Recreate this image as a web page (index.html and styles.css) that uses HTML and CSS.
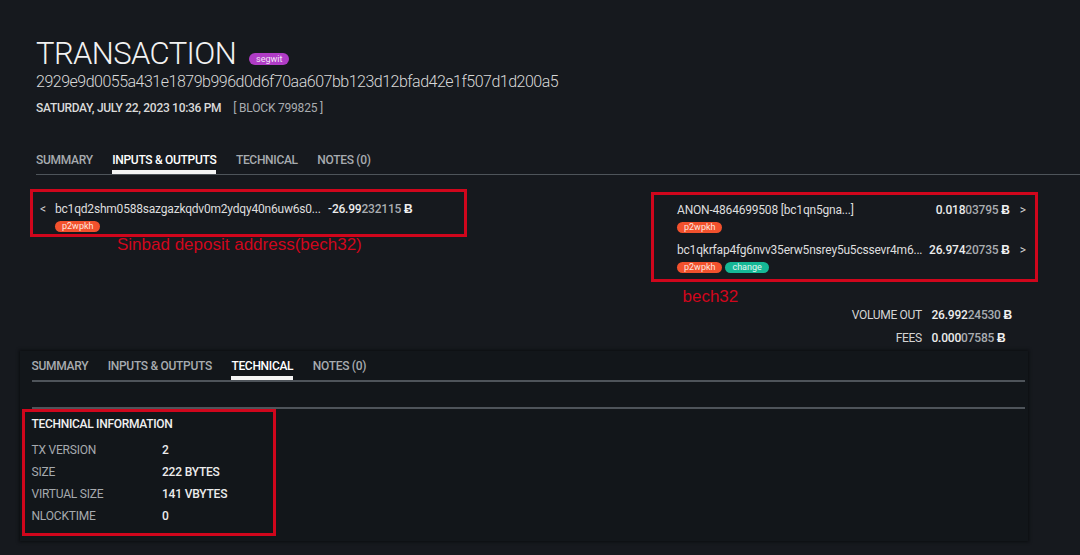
FILE: index.html
```html
<!DOCTYPE html>
<html lang="en">
<head>
<meta charset="utf-8">
<title>Transaction 2929e9d0…200a5</title>
<link rel="stylesheet" href="styles.css">
</head>
<body>
<main class="page">
  <header class="tx-head">
    <h1 class="tx-title"><span>TRANSACTION</span><span class="badge badge-segwit">segwit</span></h1>
    <div class="tx-hash">2929e9d0055a431e1879b996d0d6f70aa607bb123d12bfad42e1f507d1d200a5</div>
    <div class="tx-meta"><span class="tx-date">SATURDAY, JULY 22, 2023 10:36 PM</span><span class="tx-block">[ BLOCK 799825 ]</span></div>
  </header>

  <nav class="tabs tabs-main">
    <a class="tab">SUMMARY</a>
    <a class="tab active">INPUTS &amp; OUTPUTS</a>
    <a class="tab">TECHNICAL</a>
    <a class="tab">NOTES (0)</a>
  </nav>

  <section class="io">
    <div class="io-col io-in">
      <div class="mark mark-in">
        <div class="io-row">
          <span class="io-arrow">&lt;</span>
          <span class="io-addr">bc1qd2shm0588sazgazkqdv0m2ydqy40n6uw6s0...</span>
          <span class="amt"><b>-26.99</b>232115 <i class="btc">Ƀ</i></span>
        </div>
        <div class="tags tags-in"><span class="tag tag-type">p2wpkh</span></div>
        <p class="note note-in">Sinbad deposit address(bech32)</p>
      </div>
    </div>

    <div class="io-col io-out">
      <div class="mark mark-out">
        <div class="out-item">
          <div class="io-row">
            <span class="io-addr">ANON-4864699508 [bc1qn5gna...]</span>
            <span class="amt"><b>0.018</b>03795 <i class="btc">Ƀ</i></span>
            <span class="io-arrow">&gt;</span>
          </div>
          <div class="tags"><span class="tag tag-type">p2wpkh</span></div>
        </div>
        <div class="out-item">
          <div class="io-row">
            <span class="io-addr">bc1qkrfap4fg6nvv35erw5nsrey5u5cssevr4m6...</span>
            <span class="amt"><b>26.974</b>20735 <i class="btc">Ƀ</i></span>
            <span class="io-arrow">&gt;</span>
          </div>
          <div class="tags"><span class="tag tag-type">p2wpkh</span><span class="tag tag-change">change</span></div>
        </div>
        <p class="note note-out">bech32</p>
      </div>

      <dl class="totals">
        <dt>VOLUME OUT</dt>
        <dd class="amt"><b>26.992</b>24530 <i class="btc">Ƀ</i></dd>
        <dt>FEES</dt>
        <dd class="amt"><b>0.000</b>07585 <i class="btc">Ƀ</i></dd>
      </dl>
    </div>
  </section>

  <section class="panel">
    <nav class="tabs tabs-tech">
      <a class="tab">SUMMARY</a>
      <a class="tab">INPUTS &amp; OUTPUTS</a>
      <a class="tab active">TECHNICAL</a>
      <a class="tab">NOTES (0)</a>
    </nav>
    <div class="panel-rule"></div>
    <div class="mark mark-tech">
      <h2 class="tech-title">TECHNICAL INFORMATION</h2>
      <dl class="tech-grid">
        <dt>TX VERSION</dt><dd>2</dd>
        <dt>SIZE</dt><dd>222 BYTES</dd>
        <dt>VIRTUAL SIZE</dt><dd>141 VBYTES</dd>
        <dt>NLOCKTIME</dt><dd>0</dd>
      </dl>
    </div>
  </section>
</main>
</body>
</html>
```

FILE: styles.css
```css
* {
  box-sizing: border-box;
  margin: 0;
  padding: 0;
}

html,
body {
  background: #16191e;
}

body {
  width: 1080px;
  height: 555px;
  overflow: hidden;
  font-family: Roboto, "Liberation Sans", sans-serif;
  color: #e4e4e4;
}

.page {
  padding-top: 36px;
}

/* ---------- header ---------- */
.tx-head {
  padding-left: 36px;
}

.tx-title {
  display: flex;
  align-items: flex-end;
  font-size: 31px;
  line-height: 36px;
  font-weight: 300;
  color: #f2f2f2;
  letter-spacing: -0.6px;
}

.badge {
  display: inline-block;
  height: 12px;
  padding: 0 7px;
  margin: 0 0 7px 13px;
  border-radius: 6px;
  font-size: 9px;
  line-height: 12px;
  font-weight: 400;
  letter-spacing: 0;
  color: #f3e4f6;
}

.badge-segwit {
  background: #b03cc6;
}

.tx-hash {
  font-size: 16px;
  line-height: 20px;
  font-weight: 300;
  color: #d8d8d8;
  letter-spacing: -0.5px;
}

.tx-meta {
  margin-top: 8px;
  font-size: 12px;
  line-height: 16px;
}

.tx-date {
  font-weight: 500;
  color: #dadada;
  letter-spacing: -0.3px;
}

.tx-block {
  margin-left: 12px;
  color: #a9adb1;
  letter-spacing: -0.2px;
}

/* ---------- tabs ---------- */
.tabs {
  display: flex;
  gap: 19.5px;
  border-bottom: 1px solid #4e545a;
}

.tabs-main {
  margin: 36px 0 0 36px;
}

.tab {
  position: relative;
  padding-bottom: 6px;
  font-size: 12px;
  line-height: 16px;
  font-weight: 500;
  letter-spacing: -0.3px;
  color: #a7abaf;
}

.tab.active {
  color: #ffffff;
}

.tab.active::after {
  content: "";
  position: absolute;
  left: 0;
  right: 0;
  bottom: 0;
  height: 4px;
  background: #f4f4f4;
}

/* ---------- inputs & outputs ---------- */
.io {
  display: flex;
  justify-content: space-between;
  align-items: flex-start;
  margin-top: 14px;
  padding: 0 42px 0 30px;
}

.mark {
  position: relative;
  border: 3px solid #d0061c;
}

.mark-in {
  width: 437px;
  height: 48px;
  padding: 9px 0 0 7px;
}

.io-out {
  display: flex;
  flex-direction: column;
  margin-top: 3px;
}

.mark-out {
  width: 387px;
  height: 90px;
  padding: 7px 9px 0 23px;
}

.out-item + .out-item {
  margin-top: 9px;
}

.io-row {
  display: flex;
  align-items: center;
  font-size: 12px;
  line-height: 16px;
  color: #dedede;
}

.io-addr {
  letter-spacing: -0.2px;
  white-space: nowrap;
}

.io-in .io-arrow {
  width: 15px;
  color: #d0d0d0;
}

.io-in .io-addr {
  width: 273px;
}

.io-out .io-addr {
  flex: 1;
}

.io-out .io-arrow {
  margin-left: 10px;
  color: #d0d0d0;
}

.amt {
  font-weight: 500;
  letter-spacing: -0.2px;
  color: #a9adb1;
  white-space: nowrap;
}

.amt b {
  font-weight: 500;
  color: #ececec;
}

.btc {
  font-style: normal;
  font-weight: 700;
  color: #f0f0f0;
}

.tags {
  display: flex;
  gap: 3px;
  margin-top: 4px;
}

.tags-in {
  margin-left: 15px;
}

.tag {
  display: inline-block;
  height: 11px;
  padding: 0 7px;
  border-radius: 6px;
  font-size: 9px;
  line-height: 11px;
  color: #fde6df;
}

.tag-type {
  background: #f2512d;
}

.tag-change {
  background: #15b896;
  color: #e0f7f1;
}

.note {
  position: absolute;
  font-family: "Liberation Sans", Arial, sans-serif;
  font-size: 17px;
  line-height: 20px;
  color: #d0061c;
  white-space: nowrap;
}

.note-in {
  left: 84px;
  top: calc(100% + 0.5px);
}

.note-out {
  left: 28.5px;
  top: calc(100% + 7.5px);
}

.totals {
  display: grid;
  grid-template-columns: auto auto;
  column-gap: 9.5px;
  align-self: flex-end;
  margin: 21.5px 26px 0 0;
  font-size: 12px;
  line-height: 23px;
}

.totals dt {
  text-align: right;
  color: #d4d4d4;
  letter-spacing: -0.3px;
}

/* ---------- technical panel ---------- */
.panel {
  width: 1008px;
  height: 190px;
  margin: 1.5px 0 0 20px;
  padding: 0 3px 0 2px;
  background: #12161a;
  box-shadow: 0 0 3px 1px rgba(6, 8, 10, 0.7);
}

.tabs-tech {
  margin-left: 9.5px;
  padding-top: 7px;
  border-bottom-width: 2px;
}

.panel-rule {
  height: 27px;
  margin-left: 9.5px;
  border-bottom: 2px solid #4e545a;
}

.mark-tech {
  width: 254px;
  height: 127px;
  padding: 4.5px 0 0 6.5px;
}

.tech-title {
  font-size: 12px;
  line-height: 14px;
  font-weight: 500;
  letter-spacing: -0.3px;
  color: #f0f0f0;
}

.tech-grid {
  display: grid;
  grid-template-columns: 130.5px auto;
  margin-top: 8px;
  font-size: 12px;
  line-height: 22px;
  letter-spacing: -0.2px;
}

.tech-grid dt {
  color: #a6aaae;
}

.tech-grid dd {
  font-weight: 500;
  color: #ececec;
}
```
